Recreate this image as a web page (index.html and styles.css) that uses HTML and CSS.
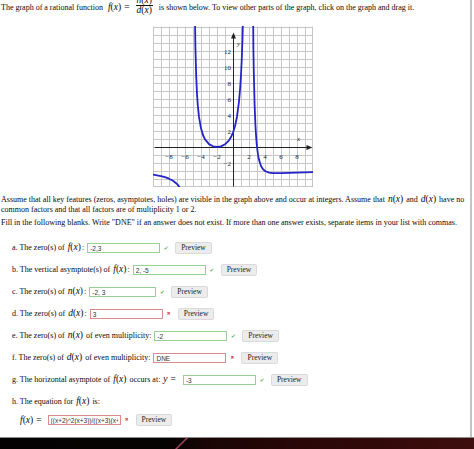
FILE: index.html
```html
<!DOCTYPE html>
<html>
<head>
<meta charset="utf-8">
<link rel="stylesheet" href="styles.css">
</head>
<body>
<div class="page">
  <div class="content">
    <p class="intro">The graph of a rational function <span class="m lead"><i>f</i>(<i>x</i>)<span class="eq">=</span></span><span class="frac m"><span class="num"><i>n</i>(<i>x</i>)</span><span class="den"><i>d</i>(<i>x</i>)</span></span> is shown below. To view other parts of the graph, click on the graph and drag it.</p>

    <div class="graph">
      <svg width="160" height="161" viewBox="0 0 160 161">
        <g transform="translate(0.5,0.5)">
          <path class="grid" d="M0,0V161M8,0V161M16,0V161M24,0V161M32,0V161M40,0V161M48,0V161M56,0V161M64,0V161M72,0V161M88,0V161M96,0V161M104,0V161M112,0V161M120,0V161M128,0V161M136,0V161M144,0V161M152,0V161M159,0V161M0,1H160M0,9H160M0,17H160M0,25H160M0,33H160M0,41H160M0,49H160M0,57H160M0,65H160M0,73H160M0,81H160M0,89H160M0,97H160M0,105H160M0,113H160M0,129H160M0,137H160M0,145H160M0,153H160M0,160H160"/>
          <path class="axis" d="M1,121H154M80,160V11"/>
          <path class="arrow" d="M159,121L153,118.5L153,123.5Z"/>
          <path class="arrow" d="M80,6L77.5,12L82.5,12Z"/>
        </g>
        <g class="lab">
          <text x="16" y="133" text-anchor="middle">−8</text>
          <text x="32" y="133" text-anchor="middle">−6</text>
          <text x="48" y="133" text-anchor="middle">−4</text>
          <text x="64" y="133" text-anchor="middle">−2</text>
          <text x="96" y="133" text-anchor="middle">2</text>
          <text x="112" y="133" text-anchor="middle">4</text>
          <text x="128" y="133" text-anchor="middle">6</text>
          <text x="144" y="133" text-anchor="middle">8</text>
          <text x="78" y="27.5" text-anchor="end">12</text>
          <text x="78" y="43.5" text-anchor="end">10</text>
          <text x="78" y="59.5" text-anchor="end">8</text>
          <text x="78" y="75.5" text-anchor="end">6</text>
          <text x="78" y="91.5" text-anchor="end">4</text>
          <text x="78" y="107.5" text-anchor="end">2</text>
          <text x="78" y="139.5" text-anchor="end">−2</text>
          <text class="var" x="84" y="19.5">y</text>
          <text class="var" x="144" y="114.5">x</text>
        </g>
        <g class="curve">
          <polyline points="0,148.7 4,149.4 8,150.2 12,151.2 16,152.7 20,154.8 24,158 25.2,159.4 26.4,161 26.8,162"/>
          <polyline points="42.1,0 42.4,21 43.2,50.2 44,67.7 44.8,79.4 46,90.9 48,102.3 50,109 52,113.3 56,118.1 60,120.3 64,121 68,120.4 72,118.3 76,114.3 78,111.1 80,106.6 82,100.2 84,90.7 86,75.5 87.2,61.6 88,49 88.8,32.3 89.6,9.5 89.8,0"/>
          <polyline points="100.2,0 100.4,23.4 100.8,46.8 101.6,78.8 102.4,98.8 103.2,112 104,121 105,128.7 106,133.8 108,140 110,143.2 112,145 116,146.6 120,147.1 128,147.2 136,146.9 144,146.6 152,146.4 160,146.2"/>
        </g>
      </svg>
    </div>

    <p class="para">Assume that all key features (zeros, asymptotes, holes) are visible in the graph above and occur at integers. Assume that <span class="m"><i>n</i>(<i>x</i>)</span> and <span class="m"><i>d</i>(<i>x</i>)</span> have no common factors and that all factors are of multiplicity 1 or 2.</p>

    <p class="para fill">Fill in the following blanks. Write "DNE" if an answer does not exist. If more than one answer exists, separate items in your list with commas.</p>

    <div class="items">
      <div class="row">
        <span class="lbl">a. The zero(s) of <span class="m"><i>f</i>(<i>x</i>)</span>:</span>
        <input class="ans ok" value="-2,3">
        <span class="mark good">✔</span>
        <button class="pv">Preview</button>
      </div>
      <div class="row">
        <span class="lbl">b. The vertical asymptote(s) of <span class="m"><i>f</i>(<i>x</i>)</span>:</span>
        <input class="ans ok" value="2, -5">
        <span class="mark good">✔</span>
        <button class="pv">Preview</button>
      </div>
      <div class="row">
        <span class="lbl">c. The zero(s) of <span class="m"><i>n</i>(<i>x</i>)</span>:</span>
        <input class="ans ok narrow" value="-2, 3">
        <span class="mark good">✔</span>
        <button class="pv">Preview</button>
      </div>
      <div class="row">
        <span class="lbl">d. The zero(s) of <span class="m"><i>d</i>(<i>x</i>)</span>:</span>
        <input class="ans bad" value="3">
        <span class="mark wrong">✖</span>
        <button class="pv">Preview</button>
      </div>
      <div class="row">
        <span class="lbl">e. The zero(s) of <span class="m"><i>n</i>(<i>x</i>)</span> of even multiplicity:</span>
        <input class="ans ok" value="-2">
        <span class="mark good">✔</span>
        <button class="pv">Preview</button>
      </div>
      <div class="row">
        <span class="lbl">f. The zero(s) of <span class="m"><i>d</i>(<i>x</i>)</span> of even multiplicity:</span>
        <input class="ans bad" value="DNE">
        <span class="mark wrong">✖</span>
        <button class="pv">Preview</button>
      </div>
      <div class="row">
        <span class="lbl">g. The horizontal asymptote of <span class="m"><i>f</i>(<i>x</i>)</span> occurs at: <span class="m"><i>y</i><span class="eq">=</span></span></span>
        <input class="ans ok" value="-3">
        <span class="mark good">✔</span>
        <button class="pv">Preview</button>
      </div>
      <div class="row">
        <span class="lbl">h. The equation for <span class="m"><i>f</i>(<i>x</i>)</span> is:</span>
      </div>
      <div class="row eqrow">
        <span class="lbl m"><i>f</i>(<i>x</i>)<span class="eq">=</span></span>
        <input class="ans bad" value="((x+2)^2(x+3))/((x+3)(x+5)(x-2)^2)">
        <span class="mark wrong">✖</span>
        <button class="pv">Preview</button>
      </div>
    </div>
  </div>
  <div class="scroll"></div>
</div>
<div class="band"></div>
</body>
</html>
```

FILE: styles.css
```css
html, body {
  margin: 0;
  padding: 0;
  background: #fff;
}
body {
  width: 474px;
  height: 449px;
  overflow: hidden;
  font-family: "Liberation Serif", "Times New Roman", serif;
  font-size: 8px;
  line-height: 10px;
  color: #0a0a0a;
}
.page {
  display: flex;
  height: 437px;
}
.content {
  width: 470px;
  overflow: hidden;
  padding-left: 1px;
  box-sizing: border-box;
}
.scroll {
  width: 2px;
  background: #c4c4c4;
}
i {
  font-family: "Liberation Serif", serif;
  font-style: italic;
}
.m {
  font-size: 9.5px;
  line-height: 8px;
  padding: 0 1px;
}
.m.lead {
  margin-left: 2px;
}
.eq {
  margin: 0 3px;
}
.intro {
  margin: -4px 0 0 0;
  height: 19px;
  white-space: nowrap;
}
.frac {
  display: inline-flex;
  flex-direction: column;
  align-items: center;
  vertical-align: 7px;
  line-height: 9px;
  margin: 0 4px 0 2px;
  padding: 0;
}
.num {
  border-bottom: 1px solid #111;
  padding: 0 1px;
}
.den {
  padding: 0 1px;
}
.graph {
  margin: 11px 0 0 152px;
  height: 161px;
}
.graph svg {
  display: block;
}
.grid {
  stroke: #c6c6c6;
  stroke-width: 1;
  fill: none;
}
.axis {
  stroke: #222;
  stroke-width: 1;
  fill: none;
}
.arrow {
  fill: #222;
}
.lab text {
  font-family: "Liberation Serif", serif;
  font-size: 7px;
  fill: #222;
}
.lab .var {
  font-style: italic;
}
.curve polyline {
  fill: none;
  stroke: #2424c8;
  stroke-width: 1.8;
  stroke-linejoin: round;
  stroke-linecap: round;
}
.para {
  margin: 8px 0 0 0;
}
.fill {
  margin-top: 3px;
}
.items {
  margin-top: 9px;
  padding-left: 11px;
}
.row {
  display: flex;
  align-items: center;
  height: 22px;
  white-space: nowrap;
}
.lbl {
  margin-right: 3px;
}
.ans {
  width: 73px;
  height: 10px;
  box-sizing: border-box;
  margin: 0;
  padding: 0 2px;
  border: 1px solid #9fd49f;
  font-family: "Liberation Sans", Arial, sans-serif;
  font-size: 6.5px;
  line-height: 8px;
  color: #333;
  background: #fff;
  outline: none;
}
.ans.narrow {
  width: 67px;
}
.ans.ok {
  border-color: #96d296;
}
.ans.bad {
  border-color: #dc8a90;
}
.mark {
  width: 6px;
  margin: 0 6px 0 3px;
  font-family: "DejaVu Sans", sans-serif;
  text-align: center;
}
.mark.good {
  color: #5cb85c;
  font-size: 5.5px;
}
.mark.wrong {
  color: #d9434e;
  font-size: 4.5px;
}
.pv {
  height: 12px;
  margin: 0;
  padding: 0 5px;
  font-family: "Liberation Serif", serif;
  font-size: 7.5px;
  line-height: 10px;
  color: #222;
  background: #ececec;
  border: 1px solid #dadada;
  border-radius: 2px;
}
.eqrow {
  height: 14px;
  padding-left: 8px;
}
.eqrow .lbl {
  padding: 0;
}
.band {
  position: relative;
  height: 12px;
  border-top: 1px solid #8c8c8c;
  box-sizing: border-box;
  background: linear-gradient(90deg, #040202 0%, #060303 36%, #1a0505 44%, #2a0707 65%, #380b0b 90%, #3e0e0e 100%);
  overflow: hidden;
}
.band::after {
  content: "";
  position: absolute;
  left: 180px;
  top: -1px;
  width: 1.5px;
  height: 14px;
  background: #a34462;
  transform: skewX(-45deg);
}
```
